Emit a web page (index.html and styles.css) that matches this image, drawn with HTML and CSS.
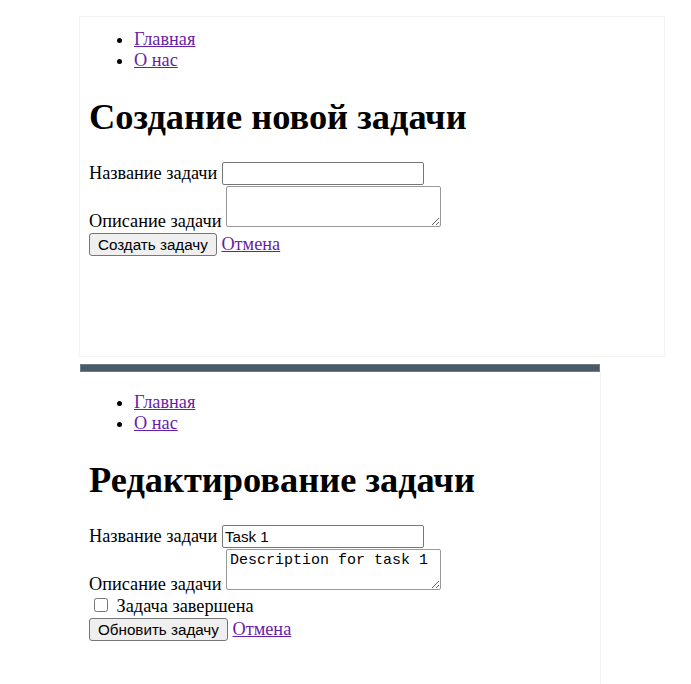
FILE: index.html
```html
<!DOCTYPE html>
<html lang="ru">
<head>
<meta charset="utf-8">
<title>Задачи</title>
<link rel="stylesheet" href="styles.css">
</head>
<body>
<div class="page">
  <div class="panel panel-create">
    <ul class="nav">
      <li><a href="#">Главная</a></li>
      <li><a href="#">О нас</a></li>
    </ul>
    <h1>Создание новой задачи</h1>
    <form class="form">
      <label>Название задачи</label> <input type="text" class="field-input"><br>
      <label>Описание задачи</label> <textarea class="field-area"></textarea><br>
      <button type="button" class="btn">Создать задачу</button> <a href="#">Отмена</a>
    </form>
  </div>
  <div class="bar"></div>
  <div class="panel panel-edit">
    <ul class="nav">
      <li><a href="#">Главная</a></li>
      <li><a href="#">О нас</a></li>
    </ul>
    <h1>Редактирование задачи</h1>
    <form class="form">
      <label>Название задачи</label> <input type="text" class="field-input" value="Task 1"><br>
      <label>Описание задачи</label> <textarea class="field-area">Description for task 1</textarea><br>
      <input type="checkbox" class="check"> <label>Задача завершена</label><br>
      <button type="button" class="btn">Обновить задачу</button> <a href="#">Отмена</a>
    </form>
  </div>
</div>
</body>
</html>
```
FILE: styles.css
```css
html, body {
  margin: 0;
  background: #ffffff;
}
body {
  font-family: "Liberation Serif", "Times New Roman", serif;
  font-size: 18.3px;
  color: #000;
}
.page {
  padding: 16px 0 0 79px;
}
.panel {
  box-sizing: border-box;
}
.panel-create {
  width: 586px;
  height: 341px;
  border: 1px solid #f3f3f3;
  padding: 12px 0 0 9px;
}
.bar {
  margin: 7px 0 0 1px;
  width: 520px;
  height: 8px;
  background: #4a5a66;
  box-shadow: inset 0 0 0 1px #6c7b86;
}
.panel-edit {
  margin-left: 1px;
  width: 521px;
  height: 320px;
  border-right: 1px solid #f3f3f3;
  padding: 20px 0 0 9px;
}
.nav {
  margin: 0 0 19px 0;
  padding-left: 45px;
}
a {
  color: #681da8;
}
h1 {
  font-size: 36.4px;
  margin: 25px 0 24px;
}
.field-input {
  box-sizing: border-box;
  width: 202px;
  height: 23px;
  margin: 0;
  padding: 1px 2px;
  border: 1px solid #767676;
  border-radius: 2px;
  font-family: "Liberation Sans", Arial, sans-serif;
  font-size: 15.2px;
  color: #000;
}
.field-area {
  box-sizing: border-box;
  width: 215px;
  height: 41px;
  margin: 1px 0 0;
  padding: 2px 3px;
  border: 1px solid #9a9a9a;
  border-radius: 2px;
  font-family: "Liberation Mono", "Courier New", monospace;
  font-size: 15px;
  color: #000;
  vertical-align: baseline;
}
.check {
  width: 14px;
  height: 14px;
  margin: 3px 4px 3px 5px;
}
.btn {
  box-sizing: border-box;
  height: 23px;
  margin: 1px 0 0;
  padding: 1px 8px;
  background: #efefef;
  border: 1px solid #767676;
  border-radius: 3px;
  font-family: "Liberation Sans", Arial, sans-serif;
  font-size: 15.2px;
  color: #000;
}
```
